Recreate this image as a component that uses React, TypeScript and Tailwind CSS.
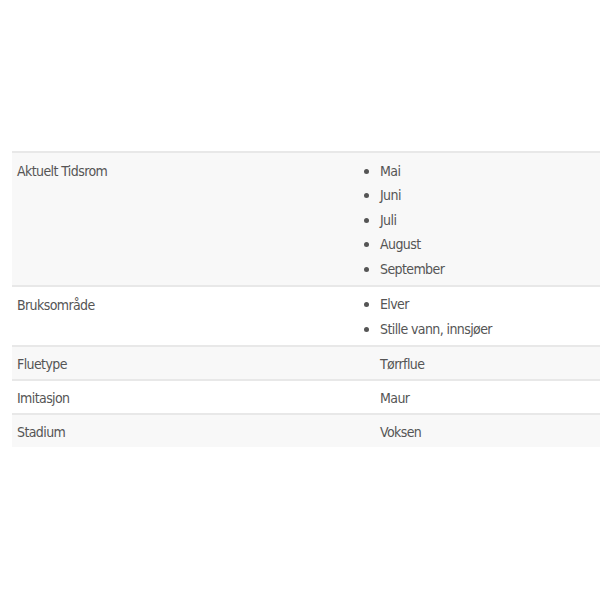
import React from "react";

const rows: { label: string; values: string[]; list: boolean; bg: string }[] = [
  { label: "Aktuelt Tidsrom", values: ["Mai", "Juni", "Juli", "August", "September"], list: true, bg: "bg-[#f8f8f8]" },
  { label: "Bruksområde", values: ["Elver", "Stille vann, innsjøer"], list: true, bg: "bg-white" },
  { label: "Fluetype", values: ["Tørrflue"], list: false, bg: "bg-[#f8f8f8]" },
  { label: "Imitasjon", values: ["Maur"], list: false, bg: "bg-white" },
  { label: "Stadium", values: ["Voksen"], list: false, bg: "bg-[#f8f8f8]" },
];

export default function App() {
  return (
    <div
      className="w-[600px] h-[600px] bg-white pt-[151px] pl-[12px] text-[#555] text-[14px] tracking-[-0.6px]"
      style={{ fontFamily: '"Liberation Sans Narrow", "DejaVu Sans Condensed", "Roboto", sans-serif' }}
    >
      <div className="border-t-2 border-[#e8e8e8]">
        {rows.map((r, i) => (
          <div
            key={r.label}
            className={`flex ${r.bg} ${i > 0 ? "border-t-2 border-[#e8e8e8]" : ""}`}
          >
            <div className={`w-[350px] shrink-0 pl-[5px] ${r.list ? "pt-[6px]" : "pt-[5px] pb-[3px]"} leading-[24px]`}>
              {r.label}
            </div>
            <div className={`flex-1 ${r.list ? "pt-[6px] pb-[3px]" : "pt-[5px] pb-[3px] pl-[18px]"}`}>
              {r.list ? (
                <ul className="flex flex-col">
                  {r.values.map((v) => (
                    <li key={v} className="flex items-center h-[24.5px] pl-[2px]">
                      <span className="w-[5px] h-[5px] rounded-full bg-[#555] mr-[11px]" />
                      {v}
                    </li>
                  ))}
                </ul>
              ) : (
                <div className="leading-[24px]">{r.values[0]}</div>
              )}
            </div>
          </div>
        ))}
      </div>
    </div>
  );
}
